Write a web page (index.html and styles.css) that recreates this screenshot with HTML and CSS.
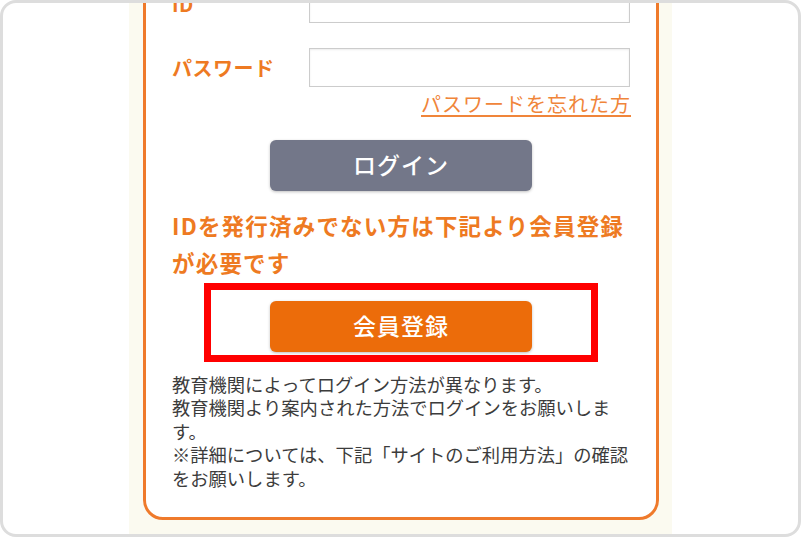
FILE: index.html
```html
<!DOCTYPE html>
<html lang="ja">
<head>
<meta charset="utf-8">
<title>ログイン</title>
<link rel="stylesheet" href="styles.css">
</head>
<body>
<div class="frame">
  <div class="column">
    <div class="card">
      <div class="field-row">
        <label class="field-label" for="uid">ID</label>
        <input class="field-input" id="uid" type="text">
      </div>
      <div class="field-row">
        <label class="field-label" for="pw">パスワード</label>
        <input class="field-input" id="pw" type="password">
      </div>
      <div class="forgot-row"><a class="forgot-link" href="#">パスワードを忘れた方</a></div>
      <div class="btn-row"><button class="btn btn-login" type="button">ログイン</button></div>
      <p class="notice">IDを発行済みでない方は下記より会員登録が必要です</p>
      <div class="highlight">
        <button class="btn btn-register" type="button">会員登録</button>
      </div>
      <p class="info">教育機関によってログイン方法が異なります。<br>教育機関より案内された方法でログインをお願いします。<br>※詳細については、下記「サイトのご利用方法」の確認をお願いします。</p>
    </div>
  </div>
</div>
</body>
</html>
```

FILE: styles.css
```css
html, body {
  margin: 0;
  padding: 0;
  background: #ffffff;
}

body {
  font-family: "Noto Sans CJK JP", "Noto Sans", sans-serif;
}

.frame {
  box-sizing: border-box;
  width: 801px;
  height: 537px;
  border: 3px solid #dddddd;
  border-radius: 16px;
  background: #ffffff;
  overflow: hidden;
  display: flex;
  justify-content: center;
}

.column {
  width: 543px;
  height: 100%;
  background: #fbfaf0;
  display: flex;
  flex-direction: column;
}

.card {
  margin: -42px 13px 0 14px;
  border: 3px solid #ef7a2b;
  border-radius: 20px;
  background: #ffffff;
  padding: 20px 26px 27px;
}

.field-row {
  display: flex;
  align-items: center;
  height: 39px;
}

.field-row + .field-row {
  margin-top: 25px;
}

.field-label {
  width: 137px;
  flex: none;
  font-size: 20px;
  font-weight: 700;
  letter-spacing: 0.5px;
  color: #ee7a22;
  line-height: 1;
}

.field-input {
  flex: 1;
  box-sizing: border-box;
  height: 39px;
  margin: 0;
  border: 1px solid #cccccc;
  border-radius: 0;
  background: #ffffff;
  box-shadow: inset 0 1px 2px rgba(0, 0, 0, 0.08);
  outline: none;
}

.forgot-row {
  margin-top: 5px;
  text-align: right;
  line-height: 24px;
}

.forgot-link {
  font-size: 20px;
  letter-spacing: 1px;
  margin-right: -1px;
  color: #f0853a;
  text-decoration: underline;
  text-underline-offset: 3px;
}

.btn-row {
  margin-top: 23px;
  display: flex;
  justify-content: center;
}

.btn {
  box-sizing: border-box;
  width: 262px;
  height: 51px;
  border: none;
  border-radius: 6px;
  color: #ffffff;
  font-family: "Noto Sans CJK JP", "Noto Sans", sans-serif;
  font-size: 23px;
  font-weight: 500;
  letter-spacing: 1px;
  line-height: 1;
  padding: 0 0 3px;
  box-shadow: 0 1px 3px rgba(0, 0, 0, 0.25);
}

.btn-login {
  background: #737789;
}

.btn-register {
  background: #ec6c0a;
  padding-bottom: 2px;
}

.notice {
  margin: 16px 0 0;
  font-size: 22.5px;
  font-weight: 700;
  letter-spacing: 1.2px;
  line-height: 36.5px;
  color: #ee7a22;
}

.highlight {
  margin: 3px 32px 0;
  border: 7px solid #ff0000;
  padding: 11px 0 3px;
  display: flex;
  justify-content: center;
}

.info {
  margin: 11px 0 0;
  font-size: 18.3px;
  line-height: 23.4px;
  color: #3c3c3c;
}
```
